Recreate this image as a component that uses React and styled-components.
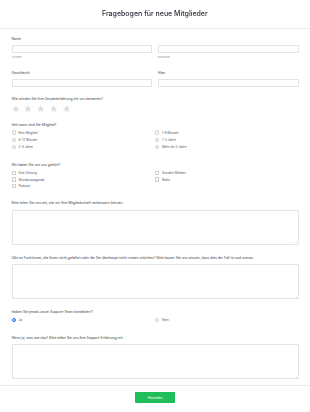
import React from "react";
import styled, { createGlobalStyle } from "styled-components";

const Global = createGlobalStyle`
  html, body { margin: 0; padding: 0; background: #fff; }
  body {
    font-family: Inter, "Noto Sans", sans-serif;
    color: #333;
    -webkit-font-smoothing: antialiased;
  }
  * { box-sizing: border-box; }
`;

const Page = styled.div`
  width: 310px;
  background: #fff;
`;

const Header = styled.header`
  height: 28.5px;
  display: flex;
  align-items: center;
  justify-content: center;
  border-bottom: 0.6px solid #ececec;
`;

const Title = styled.h1`
  margin: 0;
  font-size: 7px;
  font-weight: 500;
  color: #2b2f3a;
  letter-spacing: 0;
  will-change: transform;
`;

const Body = styled.main`
  padding: 8.6px 11.5px 5.7px;
  display: flex;
  flex-direction: column;
  gap: 10.3px;
`;

const Field = styled.section`
  display: flex;
  flex-direction: column;
  padding-bottom: ${(p) => p.$extra || 0}px;
`;

const Label = styled.div`
  font-size: 3.4px;
  line-height: 5px;
  color: #3d3d3d;
  margin-bottom: ${(p) => (p.$tight ? 1.1 : 3.3)}px;
`;

const TwoCols = styled.div`
  display: grid;
  grid-template-columns: 1fr 1fr;
  column-gap: ${(p) => p.$gap ?? 5.5}px;
`;

const Col = styled.div`
  display: flex;
  flex-direction: column;
`;

const Input = styled.div`
  height: 8px;
  border: 0.6px solid #e4e4e4;
  border-radius: 0.8px;
  background: #fff;
`;

const SubLabel = styled.div`
  font-size: 2.4px;
  line-height: 4px;
  color: #9a9a9a;
  margin-top: 3px;
`;

const Stars = styled.div`
  display: flex;
  gap: 5.2px;
  height: 7px;
  align-items: center;
`;

const OptionsGrid = styled.div`
  display: grid;
  grid-template-columns: 1fr 1fr;
`;

const Option = styled.div`
  height: ${(p) => p.$h || 7.3}px;
  display: flex;
  align-items: center;
  gap: 2.7px;
  font-size: 3.1px;
  color: #555;
`;

const Radio = styled.span`
  width: 4.4px;
  height: 4.4px;
  border-radius: 50%;
  flex: none;
  border: 0.5px solid ${(p) => (p.$checked ? "#2a6ef0" : "#cfcfcf")};
  background: ${(p) => (p.$checked ? "#2a6ef0" : "#fff")};
  box-shadow: ${(p) => (p.$checked ? "inset 0 0 0 0.9px #fff" : "none")};
`;

const Check = styled.span`
  width: 4.2px;
  height: 4.2px;
  border-radius: 0.5px;
  flex: none;
  border: 0.5px solid #cfcfcf;
  background: #fff;
`;

const TextArea = styled.div`
  position: relative;
  height: 35.5px;
  border: 0.6px solid #e4e4e4;
  border-radius: 1px;
  background: #fff;
`;

const Grip = styled.svg`
  position: absolute;
  right: 0.6px;
  bottom: 0.6px;
  width: 2px;
  height: 2px;
`;

const Footer = styled.footer`
  border-top: 0.6px solid #ececec;
  display: flex;
  justify-content: center;
  padding-top: 6.4px;
  padding-bottom: 12px;
`;

const Button = styled.button`
  width: 40px;
  height: 10.7px;
  border: none;
  border-radius: 0.8px;
  background: #1fbe5b;
  color: #fff;
  font-family: Inter, sans-serif;
  font-size: 3.1px;
  padding: 0;
  display: flex;
  align-items: center;
  justify-content: center;
`;

const Star = () => (
  <svg width="7.6" height="7.6" viewBox="0 0 24 24">
    <path
      d="M12 1l3.3 7 7.7 1-5.6 5.3 1.5 7.7L12 18.2 5.1 22l1.5-7.7L1 9l7.7-1z"
      fill="#dedede"
    />
  </svg>
);

const Area = () => (
  <TextArea>
    <Grip viewBox="0 0 4 4">
      <path d="M4 0L0 4M4 2L2 4" stroke="#bbb" strokeWidth="0.6" />
    </Grip>
  </TextArea>
);

const memberOptions = [
  "Kein Mitglied",
  "1-6 Monate",
  "6-12 Monate",
  "1-3 Jahre",
  "3-5 Jahre",
  "Mehr als 5 Jahre",
];

const sourceOptions = ["Eine Zeitung", "Sozialen Medien", "Mundpropaganda", "Radio", "Podcast"];

export default function App() {
  return (
    <Page>
      <Global />
      <Header>
        <Title>Fragebogen für neue Mitglieder</Title>
      </Header>
      <Body>
        <Field>
          <Label>Name</Label>
          <TwoCols>
            <Col>
              <Input />
              <SubLabel>Vorname</SubLabel>
            </Col>
            <Col>
              <Input />
              <SubLabel>Nachname</SubLabel>
            </Col>
          </TwoCols>
        </Field>

        <TwoCols>
          <Field>
            <Label>Geschlecht</Label>
            <Input />
          </Field>
          <Field>
            <Label>Alter</Label>
            <Input />
          </Field>
        </TwoCols>

        <Field>
          <Label>Wie würden Sie Ihre Gesamterfahrung mit uns bewerten?</Label>
          <Stars>
            {[0, 1, 2, 3, 4].map((i) => (
              <Star key={i} />
            ))}
          </Stars>
        </Field>

        <Field $extra={2}>
          <Label $tight>Seit wann sind Sie Mitglied?</Label>
          <OptionsGrid>
            {memberOptions.map((o) => (
              <Option key={o}>
                <Radio />
                {o}
              </Option>
            ))}
          </OptionsGrid>
        </Field>

        <Field $extra={1.2}>
          <Label $tight>Wo haben Sie von uns gehört?</Label>
          <OptionsGrid>
            {sourceOptions.map((o) => (
              <Option key={o} $h={6.85}>
                <Check />
                {o}
              </Option>
            ))}
          </OptionsGrid>
        </Field>

        <Field $extra={0.3}>
          <Label>Bitte teilen Sie uns mit, wie wir Ihre Mitgliedschaft verbessern können.</Label>
          <Area />
        </Field>

        <Field $extra={0.3}>
          <Label>
            Gibt es Funktionen, die Ihnen nicht gefallen oder die Sie überhaupt nicht nutzen möchten? Bitte lassen Sie uns wissen, dass dies der Fall ist und warum.
          </Label>
          <Area />
        </Field>

        <Field $extra={1.8}>
          <Label $tight>Haben Sie jemals unser Support-Team kontaktiert?</Label>
          <OptionsGrid>
            <Option>
              <Radio $checked />
              Ja
            </Option>
            <Option>
              <Radio />
              Nein
            </Option>
          </OptionsGrid>
        </Field>

        <Field>
          <Label>Wenn ja, was war das? Bitte teilen Sie uns Ihre Support-Erfahrung mit.</Label>
          <Area />
        </Field>
      </Body>
      <Footer>
        <Button>Absenden</Button>
      </Footer>
    </Page>
  );
}
